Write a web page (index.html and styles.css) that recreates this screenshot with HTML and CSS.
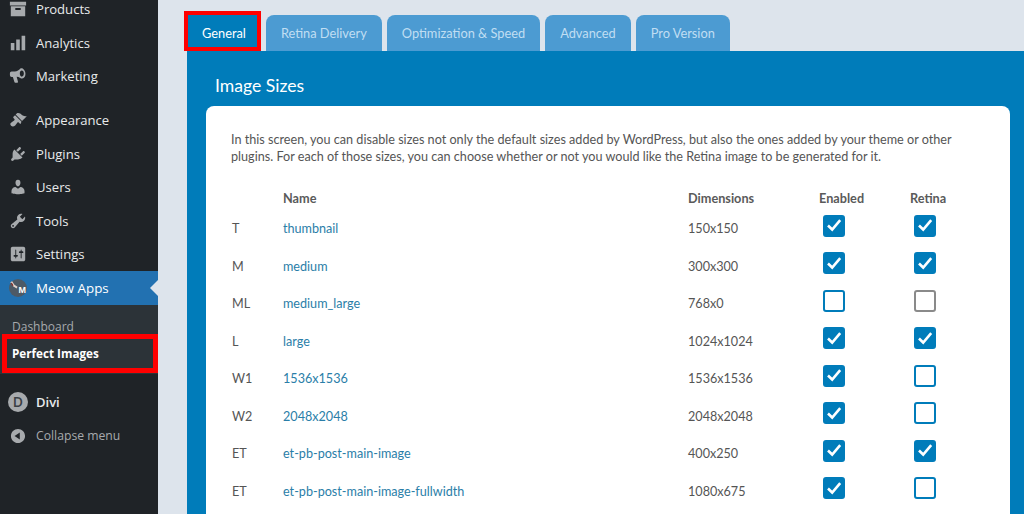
FILE: index.html
```html
<!DOCTYPE html>
<html lang="en">
<head>
<meta charset="utf-8">
<title>Perfect Images</title>
<link rel="stylesheet" href="styles.css">
</head>
<body>
<svg class="defs" aria-hidden="true">
  <symbol id="tick" viewBox="0 0 22 22"><path d="M5 11.500l4.200 4L17.200 6.200" fill="none" stroke="#fff" stroke-width="2.600"/></symbol>
</svg>
<div class="layout">
  <aside class="sidebar">
    <ul class="menu">
      <li class="item"><svg class="ico" viewBox="0 0 20 20"><path d="M1 2h18v4H1zM2 7h16v11H2zm5 2v2h6V9z" fill-rule="evenodd"/></svg><span>Products</span></li>
      <li class="item"><svg class="ico" viewBox="0 0 20 20"><path d="M2 10h4v8H2zM8 6h4v12H8zM14 2h4v16h-4z"/></svg><span>Analytics</span></li>
      <li class="item"><svg class="ico" viewBox="0 0 20 20"><path d="M13 1.500c.7-.3 1.500-.2 2.200.3 2.200 1.300 3.500 4.300 3 7-.4 2.300-2 4-3.800 4-.7 0-1.300-.2-1.900-.7-1.200-.8-2.600-1.300-4-1.300l1.500 5.700c.1.600-.2 1-.8 1H7c-.5 0-.8-.2-1-.7L4.300 11H3c-1.200 0-2-.9-2-2.500V7.500C1 5.900 1.800 5 3 5h3.500c2.500 0 4.700-1.300 6.500-3.500zm1.200 2.500c-1.200 0-2.200 1.400-2.200 3.300s1 3.400 2.200 3.400 2.300-1.500 2.300-3.400S15.500 4 14.200 4z" fill-rule="evenodd"/></svg><span>Marketing</span></li>
      <li class="item item-gap"><svg class="ico" viewBox="0 0 20 20"><path d="M14.480 11.060L7.410 3.990l1.500-1.500c.5-.56 2.300-.47 3.510.32 1.210.8 1.430 1.280 2.910 2.100 1.180.64 2.450 1.260 4.450.85zm-.71.71L6.700 4.700 4.930 6.470c-.39.39-.39 1.020 0 1.410l1.060 1.060c.39.39.39 1.030 0 1.420-.6.6-1.430 1.110-2.210 1.690-.35.26-.7.53-1.010.84C1.430 13.230.91 15.080 2.300 16.470c1.400 1.400 3.240.87 4.580-.47.31-.31.58-.66.84-1.010.58-.78 1.090-1.610 1.690-2.210.39-.39 1.020-.39 1.410 0l1.060 1.060c.39.39 1.020.39 1.410 0z"/></svg><span>Appearance</span></li>
      <li class="item"><svg class="ico" viewBox="0 0 20 20"><path d="M13.110 4.360L9.870 7.600 8 5.730l3.240-3.240c.35-.34 1.050-.2 1.560.32.52.51.66 1.210.31 1.550zm-8 1.770l.91-1.120 9.010 9.010-1.190.84c-.71.71-2.630 1.160-3.820 1.160H6.140L4.900 17.260c-.59.59-1.540.59-2.120 0-.59-.58-.59-1.530 0-2.120l1.240-1.240v-3.880c0-1.130.4-3.190 1.090-3.890zm7.260 3.970l3.240-3.240c.34-.35 1.040-.21 1.550.31.52.51.66 1.210.31 1.550l-3.240 3.250z"/></svg><span>Plugins</span></li>
      <li class="item"><svg class="ico" viewBox="0 0 20 20"><path d="M10 9.250c-2.270 0-2.730-3.440-2.730-3.440C7 4.020 7.820 2 9.970 2c2.160 0 2.980 2.020 2.710 3.810 0 0-.41 3.440-2.680 3.440zm0 2.570L12.720 10c2.390 0 4.520 2.330 4.520 4.530v2.490s-3.650 1.130-7.240 1.130c-3.650 0-7.240-1.130-7.240-1.130v-2.490c0-2.250 1.940-4.480 4.470-4.480z"/></svg><span>Users</span></li>
      <li class="item"><svg class="ico" viewBox="0 0 20 20"><path d="M16.680 9.770c-1.340 1.340-3.300 1.670-4.950.99l-5.410 6.520c-.99.99-2.590.99-3.580 0s-.99-2.590 0-3.570l6.520-5.420c-.68-1.650-.35-3.610.99-4.950 1.280-1.280 3.120-1.620 4.720-1.060l-2.890 2.890 2.820 2.820 2.860-2.870c.53 1.580.18 3.390-1.080 4.650zM3.810 16.210c.4.39 1.040.39 1.430 0 .4-.4.4-1.040 0-1.430-.39-.4-1.030-.4-1.430 0-.39.39-.39 1.030 0 1.430z" fill-rule="evenodd"/></svg><span>Tools</span></li>
      <li class="item"><svg class="ico" viewBox="0 0 20 20"><path d="M18 16V4c0-1.100-.9-2-2-2H4c-1.100 0-2 .9-2 2v12c0 1.100.9 2 2 2h12c1.100 0 2-.9 2-2zM8 11h1c.55 0 1 .45 1 1s-.45 1-1 1H8v1.500c0 .28-.22.5-.5.5s-.5-.22-.5-.5V13H6c-.55 0-1-.45-1-1s.45-1 1-1h1V5.500c0-.28.22-.5.5-.5s.5.22.5.5V11zm5-2h-1c-.55 0-1-.45-1-1s.45-1 1-1h1V5.500c0-.28.22-.5.5-.5s.5.22.5.5V7h1c.55 0 1 .45 1 1s-.45 1-1 1h-1v5.500c0 .28-.22.5-.5.5s-.5-.22-.5-.5V9z"/></svg><span>Settings</span></li>
      <li class="item item-current">
        <span class="meow"><svg viewBox="0 0 20 20"><path d="M1.500 3.500l2-1 2.500 4 3.500 2-1 2-4-2.500z" fill="#e3d3cb"/><path d="M2 5l1-1 2 3-1 1z" fill="#7a2f2a"/></svg><b>M</b></span><span class="item-label-wide">Meow Apps</span>
      </li>
    </ul>
    <ul class="submenu">
      <li class="sub">Dashboard</li>
      <li class="sub sub-active">Perfect Images</li>
    </ul>
    <ul class="menu menu-end">
      <li class="item item-divi"><span class="divi">D</span><span>Divi</span></li>
      <li class="item item-collapse"><svg class="ico" viewBox="0 0 20 20"><path d="M10 2.160c4.330 0 7.840 3.510 7.840 7.840s-3.510 7.840-7.840 7.840S2.160 14.330 2.160 10 5.710 2.160 10 2.160zm2 11.720V6.120L6.180 9.970z" fill-rule="evenodd"/></svg><span>Collapse menu</span></li>
    </ul>
  </aside>
  <main class="main">
    <nav class="tabs">
      <div class="tab tab-active">General</div>
      <div class="tab">Retina Delivery</div>
      <div class="tab">Optimization &amp; Speed</div>
      <div class="tab">Advanced</div>
      <div class="tab">Pro Version</div>
    </nav>
    <section class="panel">
      <h2 class="panel-title">Image Sizes</h2>
      <div class="card">
        <p class="intro">In this screen, you can disable sizes not only the default sizes added by WordPress, but also the ones added by your theme or other plugins. For each of those sizes, you can choose whether or not you would like the Retina image to be generated for it.</p>
        <div class="sizes">
          <div class="th"></div><div class="th">Name</div><div class="th">Dimensions</div><div class="th">Enabled</div><div class="th">Retina</div>

          <div class="cell">T</div><div class="cell link">thumbnail</div><div class="cell">150x150</div>
          <div class="cell"><span class="box on"><svg><use href="#tick"/></svg></span></div><div class="cell"><span class="box on"><svg><use href="#tick"/></svg></span></div>

          <div class="cell">M</div><div class="cell link">medium</div><div class="cell">300x300</div>
          <div class="cell"><span class="box on"><svg><use href="#tick"/></svg></span></div><div class="cell"><span class="box on"><svg><use href="#tick"/></svg></span></div>

          <div class="cell">ML</div><div class="cell link">medium_large</div><div class="cell">768x0</div>
          <div class="cell"><span class="box"></span></div><div class="cell"><span class="box box-grey"></span></div>

          <div class="cell">L</div><div class="cell link">large</div><div class="cell">1024x1024</div>
          <div class="cell"><span class="box on"><svg><use href="#tick"/></svg></span></div><div class="cell"><span class="box on"><svg><use href="#tick"/></svg></span></div>

          <div class="cell">W1</div><div class="cell link">1536x1536</div><div class="cell">1536x1536</div>
          <div class="cell"><span class="box on"><svg><use href="#tick"/></svg></span></div><div class="cell"><span class="box"></span></div>

          <div class="cell">W2</div><div class="cell link">2048x2048</div><div class="cell">2048x2048</div>
          <div class="cell"><span class="box on"><svg><use href="#tick"/></svg></span></div><div class="cell"><span class="box"></span></div>

          <div class="cell">ET</div><div class="cell link">et-pb-post-main-image</div><div class="cell">400x250</div>
          <div class="cell"><span class="box on"><svg><use href="#tick"/></svg></span></div><div class="cell"><span class="box on"><svg><use href="#tick"/></svg></span></div>

          <div class="cell">ET</div><div class="cell link">et-pb-post-main-image-fullwidth</div><div class="cell">1080x675</div>
          <div class="cell"><span class="box on"><svg><use href="#tick"/></svg></span></div><div class="cell"><span class="box"></span></div>
        </div>
      </div>
    </section>
  </main>
</div>
</body>
</html>
```

FILE: styles.css
```css
* { box-sizing: border-box; }
html, body { margin: 0; height: 514px; overflow: hidden; }
body { background: #dde4ec; font-family: "Lato", sans-serif; color: #555; }
ul { list-style: none; margin: 0; padding: 0; }
.defs { display: none; }

.layout { display: flex; height: 514px; overflow: hidden; }

.sidebar { flex: 0 0 158px; background: #1f2327; font-family: "Open Sans", sans-serif; overflow: hidden; }
.menu { margin-top: -7.500px; }
.menu-end { margin-top: 11.500px; }
.item { display: flex; align-items: center; height: 33.500px; padding-left: 9px; gap: 9px; font-size: 13.100px; color: #e8eaeb; }
.item-gap { margin-top: 10.500px; }
.ico { flex: 0 0 18px; width: 18px; height: 18px; fill: #a7aaad; }
.item-current { background: #2271b1; color: #fff; position: relative; }
.item-label-wide { font-size: 13.400px; }
.item-current::after { content: ""; position: absolute; right: 0; top: 9px; border: 8px solid transparent; border-right-color: #dde4ec; border-left-width: 0; }
.meow { flex: 0 0 18px; height: 18px; position: relative; display: block; border-radius: 50%; background: #4d5a66; }
.meow svg { position: absolute; left: 0; top: 0; width: 18px; height: 18px; }
.meow b { position: absolute; right: 1px; bottom: 2px; font: 700 9px "Liberation Sans", sans-serif; color: #fff; }

.submenu { background: #2c3338; padding: 8px 0 0; height: 69px; }
.sub { height: 27px; padding-left: 12px; display: flex; align-items: center; font-size: 12px; color: #a7aaad; }
.sub-active { color: #fff; font-weight: 700; font-size: 11.700px; position: relative; }
.sub-active::after { content: ""; position: absolute; left: 2px; right: 0; top: -6px; bottom: -6px; border: 5px solid #f00; }

.item-divi { font-weight: 600; font-size: 13px; }
.divi { flex: 0 0 20px; width: 20px; height: 20px; margin-left: -1px; margin-right: -1px; border-radius: 50%; background: #a7aaad; color: #3a3f44; display: flex; align-items: center; justify-content: center; font-size: 14px; font-weight: 600; }
.item-collapse { color: #a7aaad; font-size: 12.200px; margin-top: .5px; }

.main { flex: 1; padding: 15px 0 0 29px; min-width: 0; }
.tabs { display: flex; gap: 5px; height: 36px; padding-left: 1px; }
.tab { height: 36px; padding: 0 15px; display: flex; align-items: center; background: #4c9bd2; color: #c0def2; border-radius: 8px 8px 0 0; font-size: 12.800px; }
.tab-active { background: #007cba; color: #fff; position: relative; margin-right: 4px; padding: 0 11px 0 14px; border-radius: 0; }
.tab-active::after { content: ""; position: absolute; left: -4px; right: -4px; top: -4px; bottom: 0; border: 4.500px solid #f00; border-bottom-width: 4px; }

.panel { background: #007cba; padding: 24px 14px 0 19px; height: 463px; }
.panel-title { margin: 0 0 10px 9px; height: 21px; line-height: 21px; font-size: 17.600px; font-weight: 400; color: #fff; }
.card { background: #fff; border-radius: 8px; padding: 25px 25px 0 26px; height: 420px; }
.intro { margin: 0 0 0 -1px; font-size: 12.640px; line-height: 17px; }
.sizes { display: grid; grid-template-columns: 51px 405px 131px 91px 1fr; grid-template-rows: 23.750px; grid-auto-rows: 37.500px; margin-top: 21px; }
.th { font-size: 12.700px; font-weight: 700; display: flex; align-items: center; color: #5a5a5a; }
.cell { display: flex; align-items: center; font-size: 12.620px; }
.link { color: #2a7ea8; }
.box { display: block; width: 22px; height: 22px; margin: 0 0 6px 4px; border: 2.500px solid #007cba; border-radius: 3px; background: #fff; }
.box.on { background: #007cba; }
.box svg { display: block; width: 22px; height: 22px; margin: -2.500px; }
.box-grey { border-color: #8a8a8a; }
```
